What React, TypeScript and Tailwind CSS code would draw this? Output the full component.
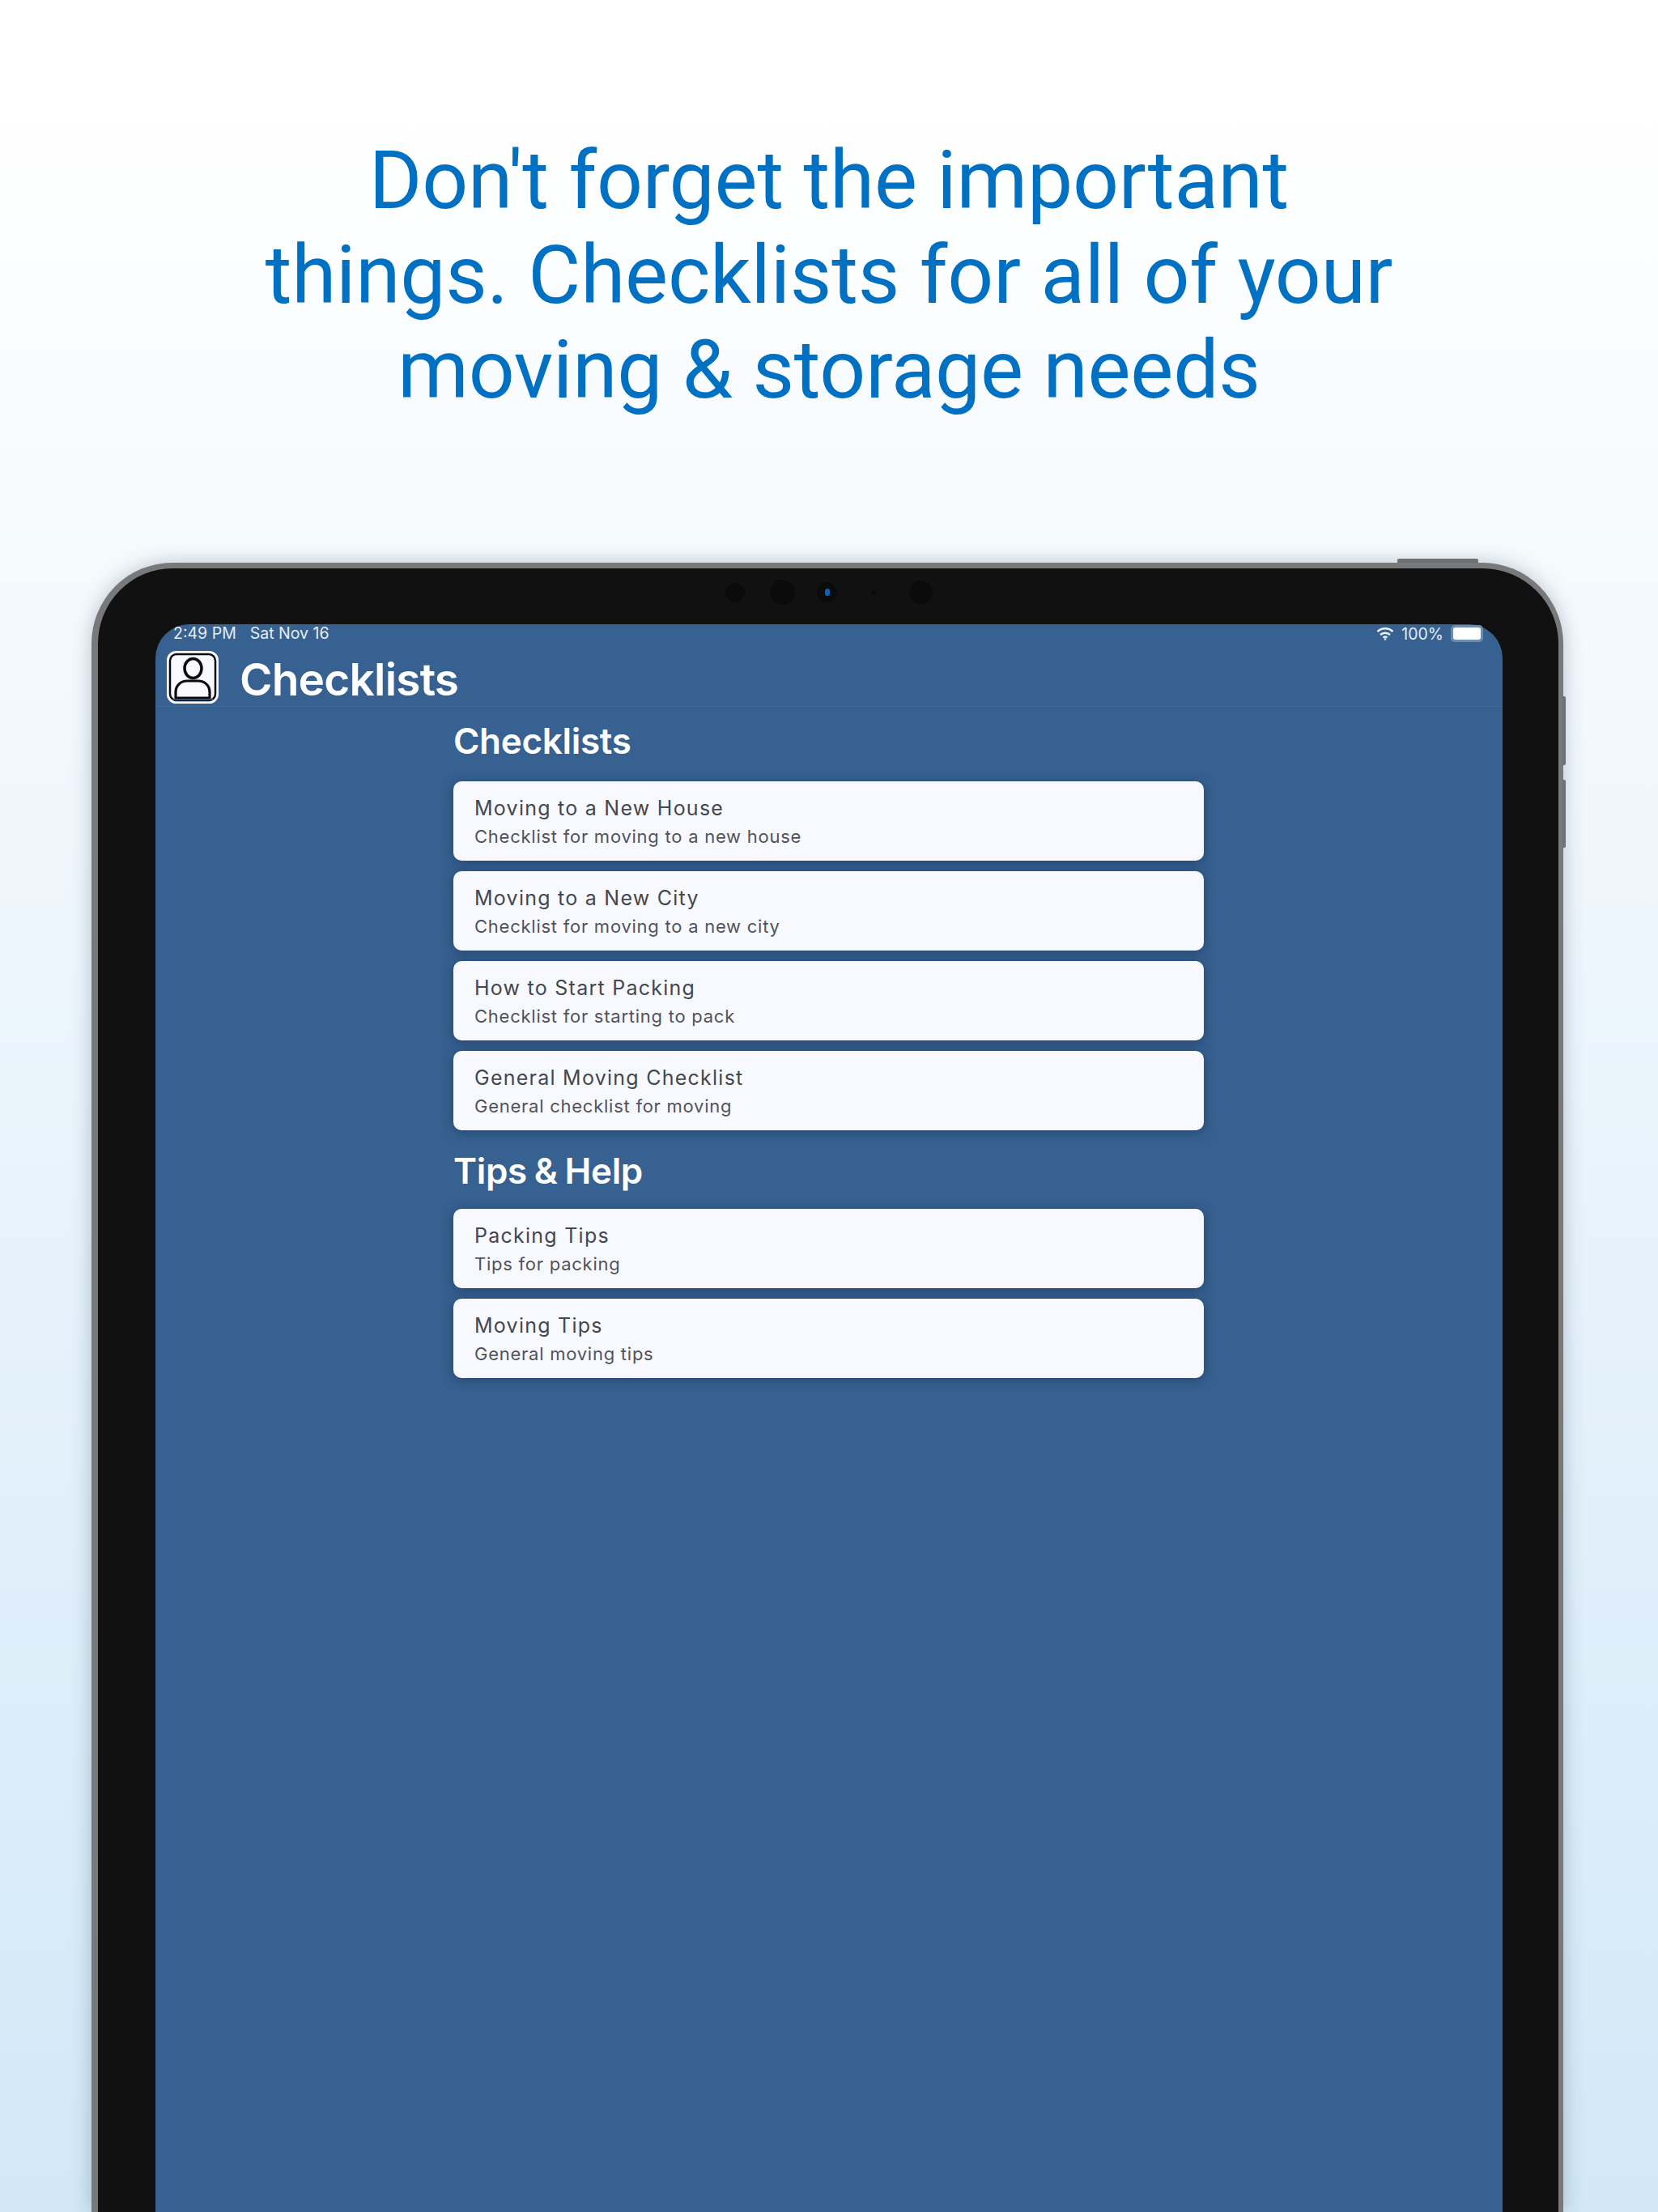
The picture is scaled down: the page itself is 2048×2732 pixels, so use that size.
import React from "react";

type Item = {
  title: string;
  subtitle: string;
};

const checklists: Item[] = [
  { title: "Moving to a New House", subtitle: "Checklist for moving to a new house" },
  { title: "Moving to a New City", subtitle: "Checklist for moving to a new city" },
  { title: "How to Start Packing", subtitle: "Checklist for starting to pack" },
  { title: "General Moving Checklist", subtitle: "General checklist for moving" },
];

const tips: Item[] = [
  { title: "Packing Tips", subtitle: "Tips for packing" },
  { title: "Moving Tips", subtitle: "General moving tips" },
];

const ListCard: React.FC<Item> = ({ title, subtitle }) => (
  <div className="h-[98px] rounded-[10px] bg-[#f8f9ff] pl-[26px] pt-[15px] shadow-[0_2px_14px_rgba(20,40,70,0.5)]">
    <div className="text-[25px] leading-[36px] tracking-[1.25px] text-[#44474d]">{title}</div>
    <div className="text-[22px] leading-[34px] tracking-[0.75px] text-[#50535a]">{subtitle}</div>
  </div>
);

const ProfileIcon = () => (
  <svg width="64" height="65" viewBox="0 0 64 65" fill="none">
    <rect x="1.500" y="1.500" width="61" height="62" rx="10" fill="#f8f9ff" stroke="#f8f9ff" strokeWidth="3" />
    <rect x="4" y="4" width="56" height="57" rx="8" stroke="#0c0c10" strokeWidth="2.5" />
    <ellipse cx="32.500" cy="21.500" rx="10.500" ry="12" stroke="#0c0c10" strokeWidth="3.500" />
    <path
      d="M11 58v-7c0-9 7-14 14-14h14c7 0 14 5 14 14v7z"
      stroke="#0c0c10"
      strokeWidth="3.200"
      strokeLinejoin="round"
    />
    <path d="M7 60h50" stroke="#274a70" strokeWidth="2" />
  </svg>
);

const WifiIcon = () => (
  <svg width="22" height="17" viewBox="0 0 22 17" fill="none" stroke="#eef3f8" strokeWidth="2.400">
    <path d="M1.500 6a14 14 0 0 1 19 0" />
    <path d="M5 10a9 9 0 0 1 12 0" />
    <path d="M8.500 13.500a4 4 0 0 1 5 0" />
    <circle cx="11" cy="15.500" r="1.200" fill="#eef3f8" stroke="none" />
  </svg>
);

export default function App() {
  return (
    <div
      className="h-[2732px] w-[2048px] overflow-hidden bg-gradient-to-b from-white from-[5%] to-[#d2e8f8]"
      style={{ fontFamily: "Inter, 'Liberation Sans', sans-serif" }}
    >
      <h1 className="flex h-[695px] flex-col items-center pt-[164px] font-['Roboto',sans-serif] text-[100px] leading-[117px] font-normal tracking-[-0.2px] text-[#0071c2]">
        <span>Don't forget the important</span>
        <span>things. Checklists for all of your</span>
        <span>moving &amp; storage needs</span>
      </h1>

      <div className="relative ml-[113px] h-[2037px] w-[1818px] rounded-t-[100px] border-t-[7px] border-r-[6px] border-l-[8px] border-[#77797b] bg-[#111111] pt-[69px] pr-[69px] pl-[71px] shadow-[0_0_24px_rgba(40,60,80,0.28)]">
        {/* top power button */}
        <div className="absolute top-[-12px] left-[1605px] h-[5px] w-[100px] rounded-t-[2px] bg-[#6f7173]" />
        {/* volume buttons */}
        <div className="absolute top-[158px] right-[-9px] h-[85px] w-[4px] rounded-r-[2px] bg-[#6f7173]" />
        <div className="absolute top-[261px] right-[-9px] h-[84px] w-[4px] rounded-r-[2px] bg-[#6f7173]" />

        {/* camera row */}
        <div className="absolute top-[18px] left-[775px] h-[24px] w-[24px] rounded-full bg-[#0b0b0b]" />
        <div className="absolute top-[14px] left-[830px] h-[31px] w-[31px] rounded-full bg-[#0b0b0b]" />
        <div className="absolute top-[17px] left-[888px] flex h-[25px] w-[25px] items-center justify-center rounded-full bg-[#0b0b0b]">
          <div className="h-[9px] w-[6px] rounded-full bg-[#0b62b8]" />
        </div>
        <div className="absolute top-[27px] left-[955px] h-[6px] w-[6px] rounded-full bg-[#0b0b0b]" />
        <div className="absolute top-[15px] left-[1002px] h-[29px] w-[29px] rounded-full bg-[#0b0b0b]" />

        <div className="h-full w-full rounded-t-[42px] bg-[#366190]">
          <div className="flex h-[33px] items-start justify-between pt-[1px] pr-[24px] pl-[22px] text-[19.5px] leading-[20px] text-[#e6ecf3]">
            <div className="flex gap-[17px]">
              <span>2:49 PM</span>
              <span>Sat Nov 16</span>
            </div>
            <div className="flex items-center gap-[9px]">
              <WifiIcon />
              <span>100%</span>
              <div className="flex h-[21px] w-[40px] items-center rounded-[5px] bg-[#6d8cb0] px-[3px]">
                <div className="h-[15px] w-full rounded-[3px] bg-white" />
              </div>
            </div>
          </div>

          <div className="flex h-[69px] items-start gap-[26px] border-b border-[#41699a] pl-[14px]">
            <ProfileIcon />
            <div className="pt-[5px] text-[55px] leading-[60px] font-semibold tracking-[-0.8px] text-white">Checklists</div>
          </div>

          <div className="ml-[368px] w-[927px]">
            <h2 className="pt-[18px] pb-[26px] text-[44px] leading-[48px] font-semibold tracking-[-0.3px] text-white">Checklists</h2>
            <div className="flex flex-col gap-[13px]">
              {checklists.map((item) => (
                <ListCard key={item.title} {...item} />
              ))}
            </div>
            <h2 className="pt-[26px] pb-[23px] text-[44px] leading-[48px] font-semibold tracking-[-0.3px] [word-spacing:-2px] text-white">Tips &amp; Help</h2>
            <div className="flex flex-col gap-[13px]">
              {tips.map((item) => (
                <ListCard key={item.title} {...item} />
              ))}
            </div>
          </div>
        </div>
      </div>
    </div>
  );
}
